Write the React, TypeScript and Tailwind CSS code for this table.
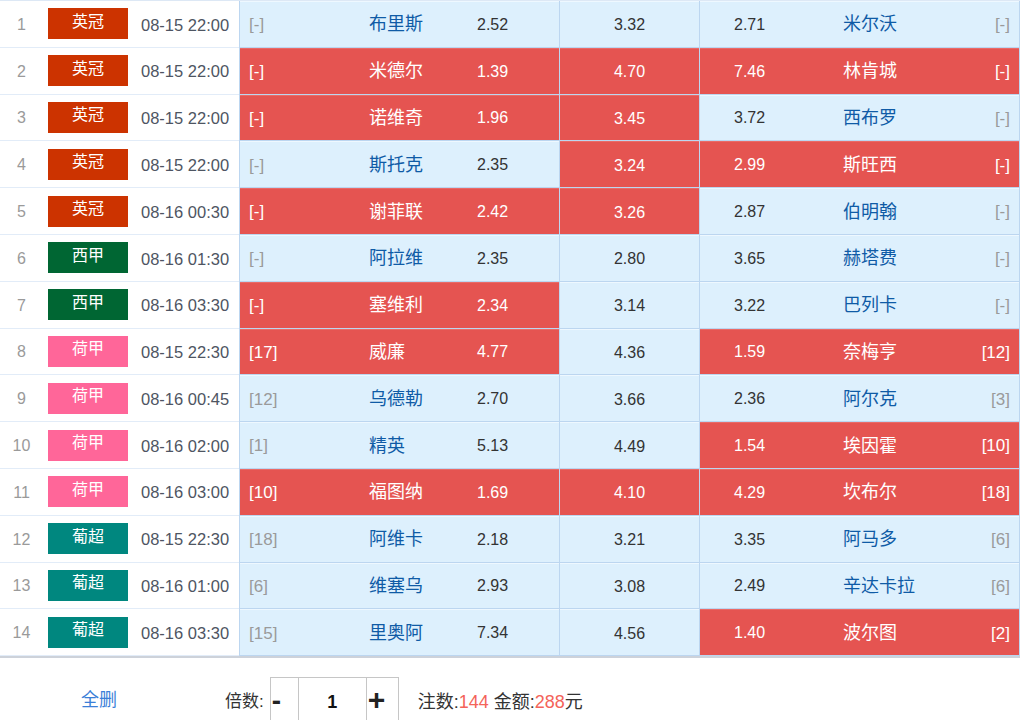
import React from "react";

type Row = {
  n: number;
  league: "英冠" | "西甲" | "荷甲" | "葡超";
  time: string;
  hr: string;
  home: string;
  h: string;
  d: string;
  a: string;
  away: string;
  ar: string;
  sel: [boolean, boolean, boolean];
};

const rows: Row[] = [
  { n: 1, league: "英冠", time: "08-15 22:00", hr: "[-]", home: "布里斯", h: "2.52", d: "3.32", a: "2.71", away: "米尔沃", ar: "[-]", sel: [false, false, false] },
  { n: 2, league: "英冠", time: "08-15 22:00", hr: "[-]", home: "米德尔", h: "1.39", d: "4.70", a: "7.46", away: "林肯城", ar: "[-]", sel: [true, true, true] },
  { n: 3, league: "英冠", time: "08-15 22:00", hr: "[-]", home: "诺维奇", h: "1.96", d: "3.45", a: "3.72", away: "西布罗", ar: "[-]", sel: [true, true, false] },
  { n: 4, league: "英冠", time: "08-15 22:00", hr: "[-]", home: "斯托克", h: "2.35", d: "3.24", a: "2.99", away: "斯旺西", ar: "[-]", sel: [false, true, true] },
  { n: 5, league: "英冠", time: "08-16 00:30", hr: "[-]", home: "谢菲联", h: "2.42", d: "3.26", a: "2.87", away: "伯明翰", ar: "[-]", sel: [true, true, false] },
  { n: 6, league: "西甲", time: "08-16 01:30", hr: "[-]", home: "阿拉维", h: "2.35", d: "2.80", a: "3.65", away: "赫塔费", ar: "[-]", sel: [false, false, false] },
  { n: 7, league: "西甲", time: "08-16 03:30", hr: "[-]", home: "塞维利", h: "2.34", d: "3.14", a: "3.22", away: "巴列卡", ar: "[-]", sel: [true, false, false] },
  { n: 8, league: "荷甲", time: "08-15 22:30", hr: "[17]", home: "威廉", h: "4.77", d: "4.36", a: "1.59", away: "奈梅亨", ar: "[12]", sel: [true, false, true] },
  { n: 9, league: "荷甲", time: "08-16 00:45", hr: "[12]", home: "乌德勒", h: "2.70", d: "3.66", a: "2.36", away: "阿尔克", ar: "[3]", sel: [false, false, false] },
  { n: 10, league: "荷甲", time: "08-16 02:00", hr: "[1]", home: "精英", h: "5.13", d: "4.49", a: "1.54", away: "埃因霍", ar: "[10]", sel: [false, false, true] },
  { n: 11, league: "荷甲", time: "08-16 03:00", hr: "[10]", home: "福图纳", h: "1.69", d: "4.10", a: "4.29", away: "坎布尔", ar: "[18]", sel: [true, true, true] },
  { n: 12, league: "葡超", time: "08-15 22:30", hr: "[18]", home: "阿维卡", h: "2.18", d: "3.21", a: "3.35", away: "阿马多", ar: "[6]", sel: [false, false, false] },
  { n: 13, league: "葡超", time: "08-16 01:00", hr: "[6]", home: "维塞乌", h: "2.93", d: "3.08", a: "2.49", away: "辛达卡拉", ar: "[6]", sel: [false, false, false] },
  { n: 14, league: "葡超", time: "08-16 03:30", hr: "[15]", home: "里奥阿", h: "7.34", d: "4.56", a: "1.40", away: "波尔图", ar: "[2]", sel: [false, false, true] },
];

const leagueBg: Record<string, string> = {
  英冠: "bg-[#cc3300]",
  西甲: "bg-[#006633]",
  荷甲: "bg-[#ff6699]",
  葡超: "bg-[#00877f]",
};

const FONT = "font-['Liberation_Sans','Noto_Sans_CJK_SC',sans-serif]";

function cellBg(on: boolean) {
  return on
    ? "bg-[#e55451] shadow-[inset_0_1px_0_#ea6a67]"
    : "bg-[#ddf0fd] shadow-[inset_0_1px_0_#eef8ff]";
}

function MatchRow({ r }: { r: Row }) {
  const [hs, ds, as] = r.sel;
  return (
    <div className="flex h-[46.8px]">
      <div className="flex w-[239px] items-center border-b border-[#e2ecf8] bg-white">
        <div className="w-[48px] pr-[5px] pt-[2px] text-center text-[16px] text-[#9a9a9a]">{r.n}</div>
        <div
          className={`flex h-[31px] w-[80px] items-center justify-center pb-[4px] text-[16px] text-white ${leagueBg[r.league]}`}
        >
          {r.league}
        </div>
        <div className="pl-[13px] pt-[2px] text-[16.5px] text-[#4e5562]">{r.time}</div>
      </div>
      <div className="flex flex-1 border-l border-[#bcd6f0]">
        <div
          className={`flex w-[320px] items-center border-b border-r border-[#bcd6f0] pl-[9px] pt-[2px] ${cellBg(hs)}`}
        >
          <span className={`w-[120px] text-[17px] ${hs ? "text-white" : "text-[#9a9a9a]"}`}>{r.hr}</span>
          <span className={`w-[108px] text-[18px] ${hs ? "text-white" : "text-[#0f5ba6]"}`}>{r.home}</span>
          <span className={`text-[16px] ${hs ? "text-white" : "text-[#333]"}`}>{r.h}</span>
        </div>
        <div
          className={`flex w-[140px] items-center justify-center border-b border-r border-[#bcd6f0] pt-[3px] text-[16px] ${ds ? "text-white" : "text-[#333]"} ${cellBg(ds)}`}
        >
          {r.d}
        </div>
        <div
          className={`flex flex-1 items-center border-b border-r border-[#bcd6f0] pl-[34px] pr-[9px] pt-[2px] ${cellBg(as)}`}
        >
          <span className={`w-[109px] text-[16px] ${as ? "text-white" : "text-[#333]"}`}>{r.a}</span>
          <span className={`flex-1 text-[18px] ${as ? "text-white" : "text-[#0f5ba6]"}`}>{r.away}</span>
          <span className={`text-[17px] ${as ? "text-white" : "text-[#9a9a9a]"}`}>{r.ar}</span>
        </div>
      </div>
    </div>
  );
}

export default function App() {
  return (
    <div className={`h-[720px] w-[1020px] overflow-hidden bg-white ${FONT}`}>
      <div className="border-t border-[#dde8f5]">
        {rows.map((r) => (
          <MatchRow key={r.n} r={r} />
        ))}
      </div>
      <div className="h-[2px] bg-[#cdd2da]" />
      <div className="flex items-start pt-[19px]">
        <div className="w-[225px] pl-[81px] pt-[10px] text-[18px] text-[#3b7fd8]">全删</div>
        <div className="pt-[12px] text-[17px] text-[#333]">倍数:</div>
        <div className="ml-[6px] flex h-[60px] border border-[#c6c6c6]">
          <div className="flex w-[28px] items-start justify-start border-r border-[#c6c6c6] pl-[1px] pt-[5px] text-[28px] font-bold leading-[36px] text-[#222]">
            -
          </div>
          <div className="flex w-[68px] items-start justify-center border-r border-[#c6c6c6] pt-[6px] text-[18px] font-bold leading-[36px] text-[#111]">
            1
          </div>
          <div className="flex w-[31px] items-start justify-start pl-[1px] pt-[4px] text-[30px] font-bold leading-[36px] text-[#222]">
            +
          </div>
        </div>
        <div className="ml-[19px] pt-[12px] text-[18px] text-[#333]">
          注数:<span className="text-[#f4645a]">144</span> 金额:<span className="text-[#f4645a]">288</span>元
        </div>
      </div>
    </div>
  );
}
